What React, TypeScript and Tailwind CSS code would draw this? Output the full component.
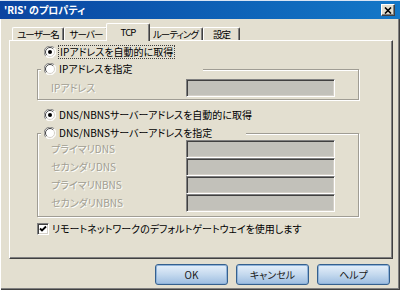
import type { FC } from "react";

type TabItem = { label: string; width: string; active?: boolean };

const tabs: TabItem[] = [
  { label: "ユーザー名", width: "w-[52px]" },
  { label: "サーバー", width: "w-[44px]" },
  { label: "TCP", width: "w-[44px]", active: true },
  { label: "ルーティング", width: "w-[55px]" },
  { label: "設定", width: "w-[37px]" },
];

const dnsRows = ["プライマリDNS", "セカンダリDNS", "プライマリNBNS", "セカンダリNBNS"];

const buttons = ["OK", "キャンセル", "ヘルプ"];

const Radio: FC<{ checked?: boolean }> = ({ checked }) => (
  <svg width="12" height="12" viewBox="0 0 12 12" className="shrink-0">
    <circle cx="6" cy="6" r="5.5" fill="#fff" />
    <path d="M10.2 1.8 A5.8 5.8 0 0 0 1.8 10.2" fill="none" stroke="#808080" strokeWidth="1" />
    <path d="M9.2 2.8 A4.5 4.5 0 0 0 2.8 9.2" fill="none" stroke="#404040" strokeWidth="1" />
    <path d="M10.2 1.8 A5.8 5.8 0 0 1 1.8 10.2" fill="none" stroke="#fff" strokeWidth="1" />
    <path d="M9.2 2.8 A4.5 4.5 0 0 1 2.8 9.2" fill="none" stroke="#d4d0c8" strokeWidth="1" />
    {checked && <circle cx="6" cy="6" r="2" fill="#000" />}
  </svg>
);

const CheckBox = () => (
  <div className="w-[12px] h-[12px] shrink-0 bg-white border border-t-[#808080] border-l-[#808080] border-r-white border-b-white shadow-[inset_1px_1px_0_#404040,inset_-1px_-1px_0_#d4d0c8] flex items-center justify-center">
    <svg width="8" height="8" viewBox="0 0 8 8">
      <path d="M1 3.5 L3 5.5 L7 1.5" fill="none" stroke="#000" strokeWidth="1.8" />
    </svg>
  </div>
);

const Field = () => (
  <div className="w-[149px] h-[18px] bg-[#c2c1ba] border border-t-[#808080] border-l-[#808080] border-r-white border-b-white shadow-[inset_1px_1px_0_#404040,inset_-1px_-1px_0_#d4d0c8]" />
);

const Label: FC<{ text: string }> = ({ text }) => (
  <span className="w-[135px] whitespace-nowrap text-[#a19e93] [text-shadow:1px_1px_0_#fff]">{text}</span>
);

export default function App() {
  return (
    <div className="w-[400px] h-[290px] flex flex-col bg-[#e3dfd0] text-[10px] leading-[14px] text-black font-['Noto_Sans_CJK_JP',sans-serif] [font-feature-settings:'palt'] overflow-hidden">
      {/* title bar */}
      <div className="h-[19px] flex items-center justify-between pl-[4px] pr-[5px] bg-gradient-to-r from-[#0b44a0] to-[#1478c8] border-t border-t-[#d8e4f4]">
        <span className="text-white font-bold text-[10px] whitespace-nowrap">'RIS' のプロパティ</span>
        <div className="w-[14px] h-[12px] bg-[#e3dfd0] border border-t-white border-l-white border-r-[#404040] border-b-[#404040] shadow-[inset_-1px_-1px_0_#808080] flex items-center justify-center">
          <svg width="8" height="7" viewBox="0 0 8 7">
            <path d="M1 0.5 L7 6.5 M7 0.5 L1 6.5" stroke="#000" strokeWidth="1.6" />
          </svg>
        </div>
      </div>

      <div className="flex-1 flex flex-col border-l border-l-white shadow-[inset_-1px_-1px_0_#404040,inset_-2px_-2px_0_#808080]">
        {/* tabs */}
        <div className="h-[21px] flex items-end pl-[11px] text-[9.5px] tracking-[-0.9px]">
          {tabs.map((tab) =>
            tab.active ? (
              <div
                key={tab.label}
                className={`${tab.width} relative z-10 -mx-[2px] -mb-[1px] h-[18px] pb-[2px] flex items-center justify-center whitespace-nowrap bg-[#e3dfd0] border-t border-l border-white border-r border-r-[#404040] shadow-[inset_-1px_0_0_#808080] rounded-t-[2px]`}
              >
                {tab.label}
              </div>
            ) : (
              <div
                key={tab.label}
                className={`${tab.width} h-[13px] flex items-center justify-center whitespace-nowrap border-t border-l border-white border-r border-r-[#404040] shadow-[inset_-1px_0_0_#808080] rounded-t-[2px]`}
              >
                {tab.label}
              </div>
            )
          )}
        </div>

        {/* tab panel */}
        <div className="ml-[8px] w-[384px] h-[219px] flex flex-col border border-t-white border-l-white border-r-[#404040] border-b-[#404040] shadow-[inset_-1px_-1px_0_#808080]">
          <div className="mt-[4px] h-[14px] pl-[34px] flex items-center gap-[2px]">
            <Radio checked />
            <span className="px-[1px] whitespace-nowrap border border-dotted border-[#404040] leading-[12px]">IPアドレスを自動的に取得</span>
          </div>

          <fieldset className="mt-[3px] ml-[27px] w-[322px] pb-[2px] border border-[#a09d94] shadow-[inset_1px_1px_0_#fff,1px_1px_0_#fff]">
            <legend className="ml-[3px] w-[162px] h-[14px] pl-[3px] flex items-center gap-[3px] whitespace-nowrap bg-[#e3dfd0]">
              <Radio />
              <span>IPアドレスを指定</span>
            </legend>
            <div className="mt-[3px] pl-[13px] flex items-center">
              <Label text="IPアドレス" />
              <Field />
            </div>
          </fieldset>

          <div className="mt-[8px] h-[14px] pl-[34px] flex items-center gap-[3px] whitespace-nowrap">
            <Radio checked />
            <span>DNS/NBNSサーバーアドレスを自動的に取得</span>
          </div>

          <fieldset className="mt-[4px] ml-[27px] w-[322px] pb-[4px] border border-[#a09d94] shadow-[inset_1px_1px_0_#fff,1px_1px_0_#fff]">
            <legend className="ml-[3px] w-[205px] h-[14px] pl-[3px] flex items-center gap-[3px] whitespace-nowrap bg-[#e3dfd0]">
              <Radio />
              <span>DNS/NBNSサーバーアドレスを指定</span>
            </legend>
            <div className="flex flex-col">
              {dnsRows.map((row) => (
                <div key={row} className="pl-[13px] flex items-center">
                  <Label text={row} />
                  <Field />
                </div>
              ))}
            </div>
          </fieldset>

          <div className="mt-[5px] h-[14px] pl-[27px] flex items-center gap-[3px] whitespace-nowrap">
            <CheckBox />
            <span>リモートネットワークのデフォルトゲートウェイを使用します</span>
          </div>
        </div>

        {/* buttons */}
        <div className="mt-[5px] pr-[10px] flex justify-end gap-[8px]">
          {buttons.map((label) => (
            <button
              key={label}
              className="w-[73px] h-[21px] rounded-[3px] border border-[#35608e] bg-gradient-to-b from-[#e6f0fa] via-[#c4d9ee] to-[#9dbde0] shadow-[inset_0_0_0_1px_#8fb3da] text-[10px] text-[#1a1a1a] flex items-center justify-center"
            >
              {label}
            </button>
          ))}
        </div>
      </div>
    </div>
  );
}
